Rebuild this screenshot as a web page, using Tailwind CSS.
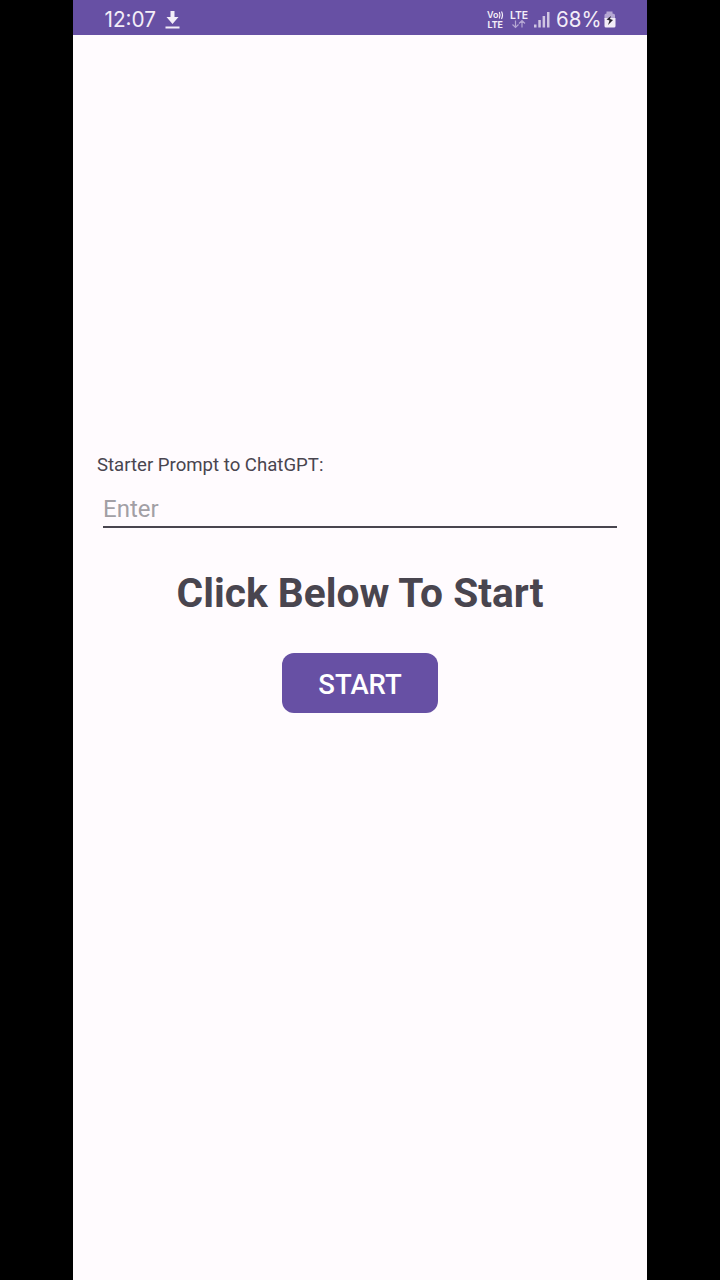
<!DOCTYPE html>
<html lang="en"><head><meta charset="utf-8"><title>Starter Prompt</title>
<script src="https://cdn.jsdelivr.net/npm/@tailwindcss/browser@4"></script></head>
<body class="bg-black">
<div class="mx-auto flex h-[1280px] w-[574px] flex-col bg-[#fffbfe] font-['Roboto',sans-serif] text-[#49454f]">
  <header class="flex h-[35px] shrink-0 items-center justify-between bg-[#6750a4] pr-[30px] pl-8 text-[#f3edf8]">
    <svg class="h-[35px] w-[80px]" viewBox="0 0 80 35"><text x="-0.500" y="27" font-family="Inter, sans-serif" font-size="21" textLength="51.500" lengthAdjust="spacingAndGlyphs" fill="currentColor">12:07</text>
      <path d="M65.500 11h4v6h4l-6 7-6-7h4zM60.500 26.500h14v2h-14z" fill="currentColor"/></svg>
    <svg class="h-[35px] w-[131px]" viewBox="0 0 131 35" fill="currentColor" font-family="Inter, sans-serif">
      <g font-weight="600" font-size="9"><text x="1" y="18" textLength="11.500" lengthAdjust="spacingAndGlyphs">Vo</text>
      <text x="1.500" y="27.500" font-weight="700" textLength="15.500" lengthAdjust="spacingAndGlyphs">LTE</text></g>
      <path d="M13.300 12q1.500 3 0 6.500M15.500 11.500q2 3.500 0 7.500" fill="none" stroke="currentColor" stroke-width="1.200"/>
      <text x="24" y="19" font-size="11" font-weight="600" textLength="18" lengthAdjust="spacingAndGlyphs">LTE</text>
      <path d="M29.500 20.500v7m-3-3 3 3 3-3M36 27.500v-7m-3 3 3-3 3 3" fill="none" stroke="#b5a7d3" stroke-width="1.200"/>
      <path d="M48 24.500h2.500v3H48zM52.300 20h2.500v7.500h-2.500zM56.600 16h2.500v11.500h-2.500zM61 12h2.500v15.500H61z" fill="#d0c6e2"/>
      <text x="70" y="27" font-size="21" textLength="45.500" lengthAdjust="spacingAndGlyphs">68%</text>
      <path d="M118.500 19v-4q0-1.500 2-1.500v-2h6v2q2.500 0 2.500 1.500v4z" fill="#b5a7d3"/>
      <path d="M118.500 18H129.500v8q0 1.500-1.500 1.500h-8q-1.500 0-1.500-1.500z"/>
      <path d="m125 16-4.500 3.500 3 1-1.500 4.500 5-5-3-1z" fill="#282431"/>
    </svg>
  </header>
  <main class="flex flex-col px-6 pt-[419px]">
    <label for="prompt" class="h-[22px] w-max text-[18.600px] leading-[22px]">Starter Prompt to ChatGPT:</label>
    <input id="prompt" placeholder="Enter" class="mx-[6px] mt-3 h-10 rounded-none border-0 border-b-2 border-[#49454f] bg-transparent p-0 pt-1 text-[24px] outline-none placeholder:text-[#a29fa5]">
    <h1 class="mt-[39px] text-center text-[40.700px] leading-[53px] font-bold whitespace-nowrap">Click Below To Start</h1>
    <button class="mt-[33px] flex h-[60px] w-[156px] items-center justify-center self-center rounded-[12px] bg-[#6750a4] pt-[3px] text-[27.500px] font-medium text-white">START</button>
  </main>
</div></body></html>
